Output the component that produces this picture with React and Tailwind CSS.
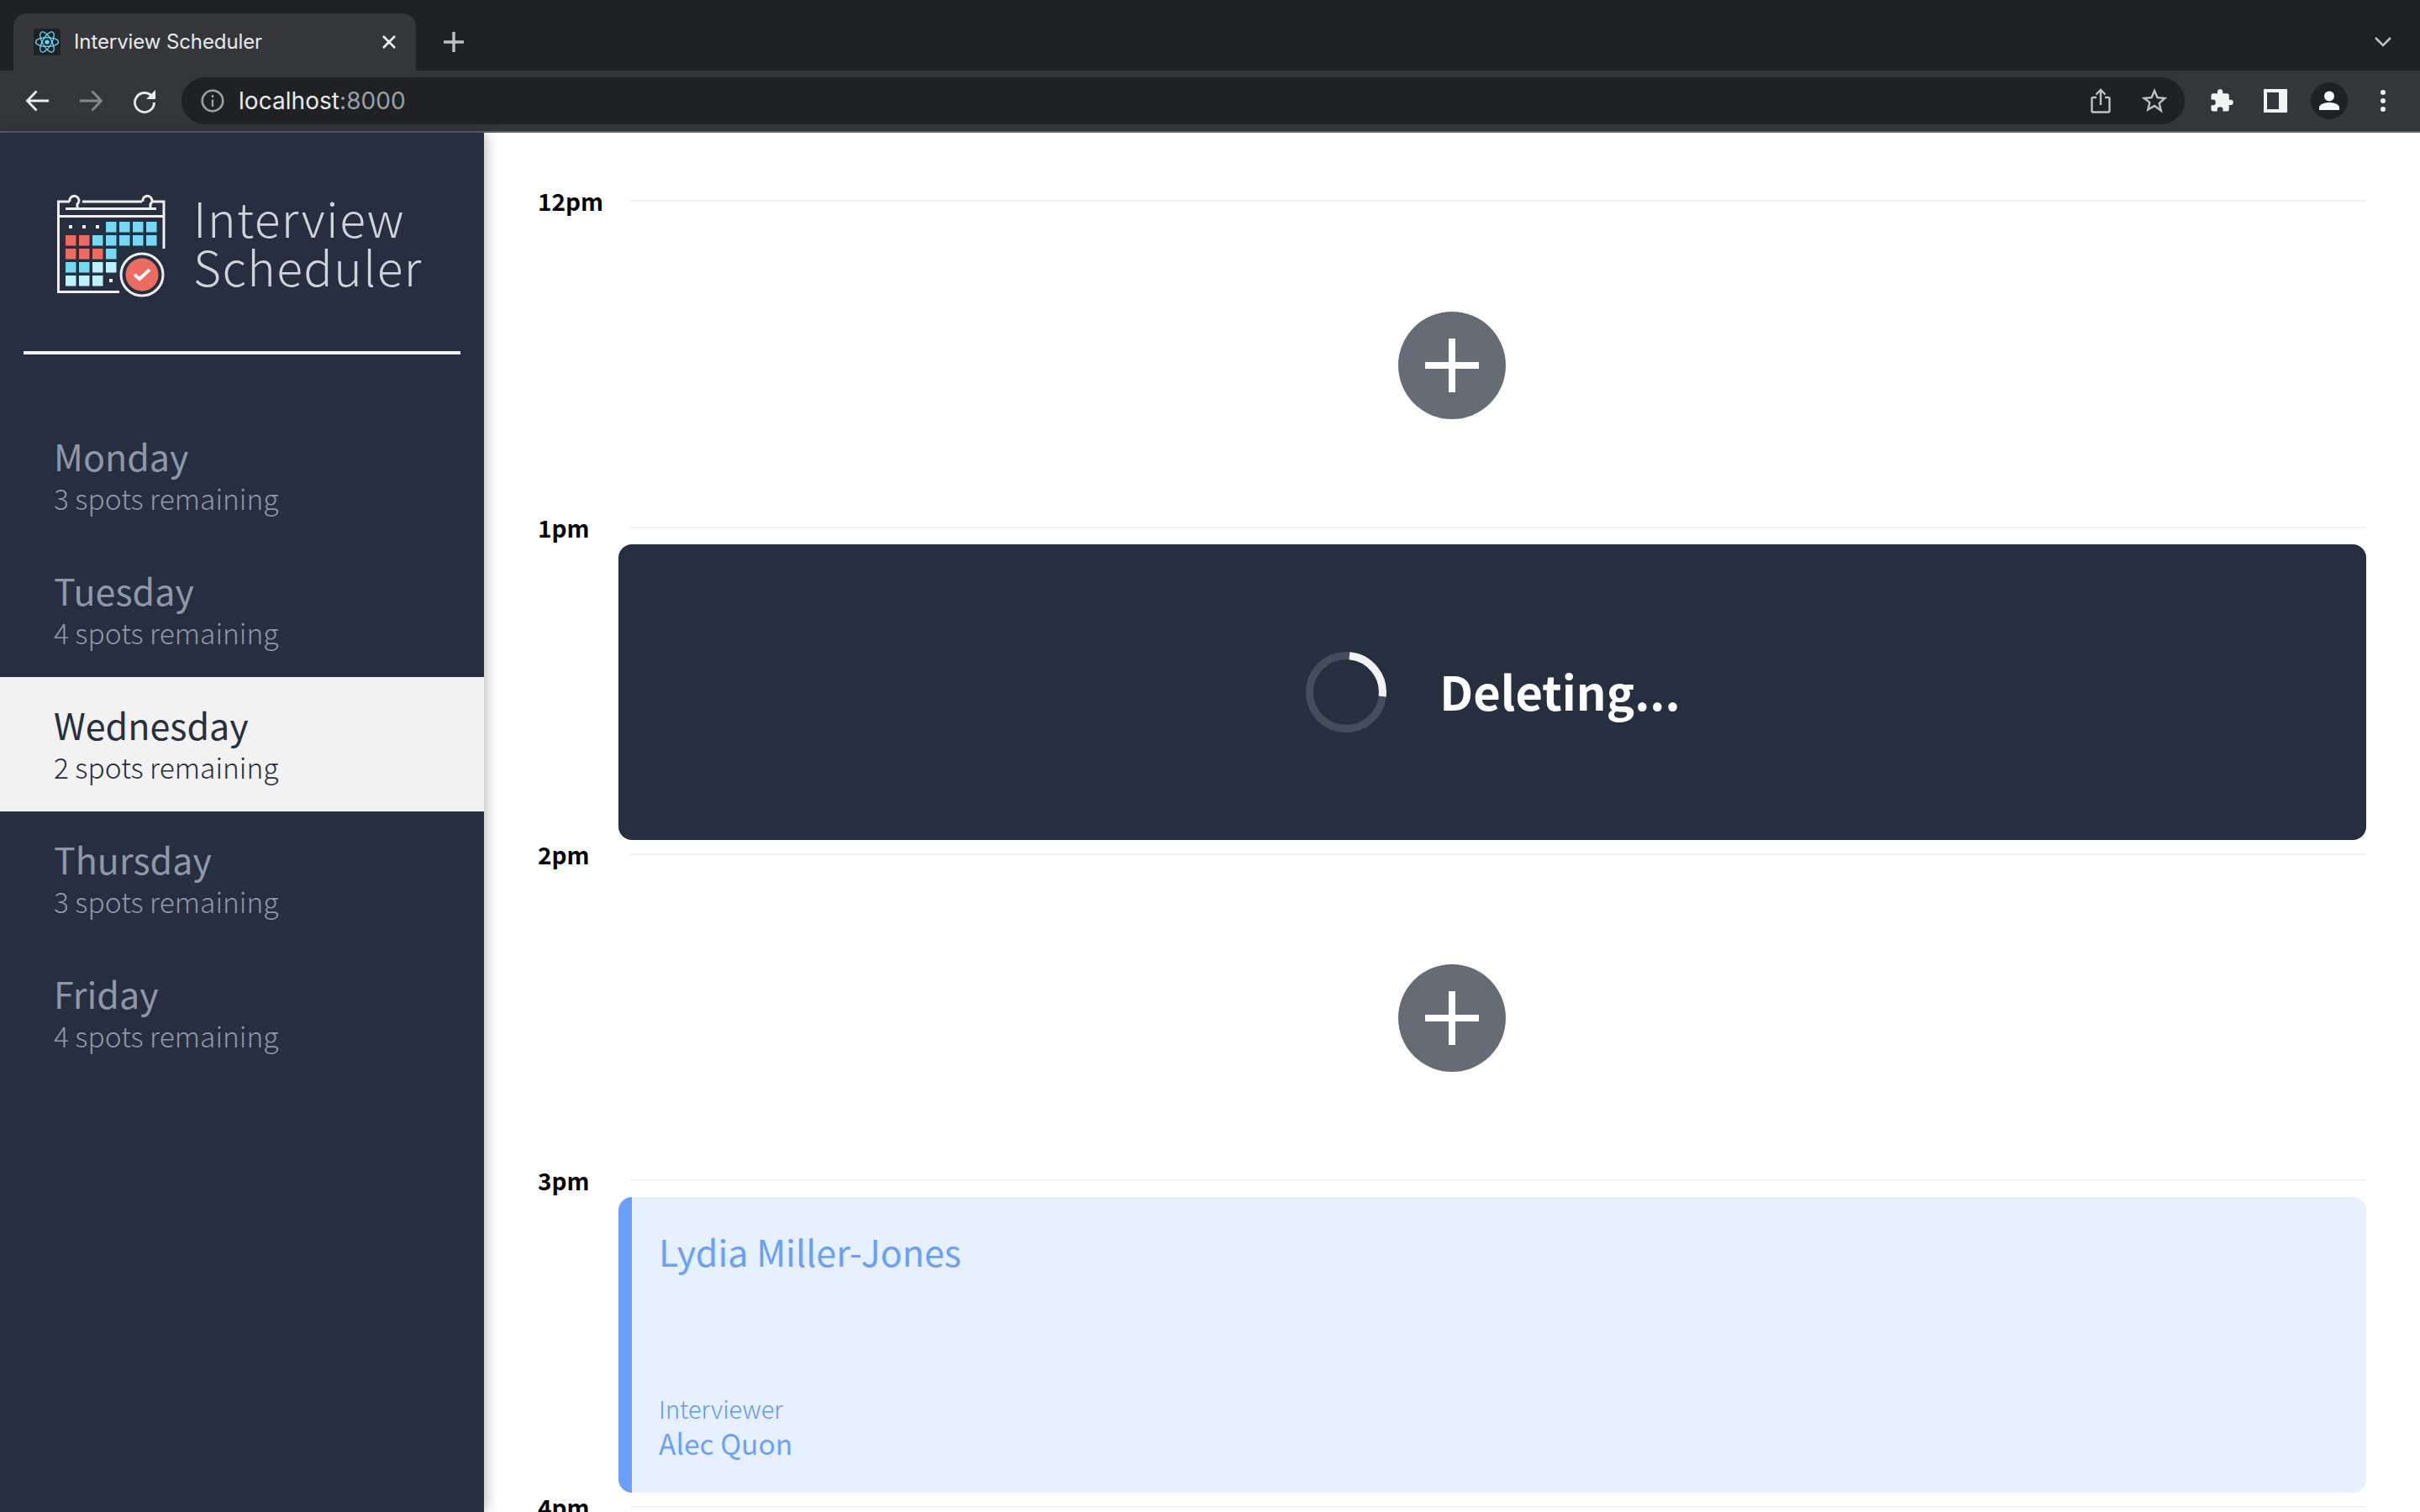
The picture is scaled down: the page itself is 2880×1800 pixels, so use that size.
const FONT = "font-['Noto_Sans_CJK_SC','Noto_Sans',sans-serif]";

const days = [
  { name: "Monday", spots: "3 spots remaining" },
  { name: "Tuesday", spots: "4 spots remaining" },
  { name: "Wednesday", spots: "2 spots remaining", selected: true },
  { name: "Thursday", spots: "3 spots remaining" },
  { name: "Friday", spots: "4 spots remaining" },
];

const BLUE = "#76d7f2";
const RED = "#ee6b62";
const PALE = "#bdf1fb";

const cells = [
  [76, 44, BLUE], [92, 44, BLUE], [108, 44, BLUE], [124, 44, BLUE],
  [28, 60, RED], [44, 60, RED], [60, 60, BLUE], [76, 60, BLUE], [92, 60, BLUE], [108, 60, BLUE], [124, 60, BLUE],
  [28, 76, RED], [44, 76, RED], [60, 76, RED], [76, 76, BLUE],
  [28, 92, BLUE], [44, 92, BLUE], [60, 92, PALE], [76, 92, PALE],
  [28, 108, PALE], [44, 108, PALE], [60, 108, PALE],
];

function Logo() {
  return (
    <svg width="160" height="140" viewBox="0 0 160 140" className="shrink-0 -ml-[18px] -mt-[9px]" fill="none">
      <g stroke="#eeeeee" strokeWidth="3">
        <path d="M33 20H19.500V127.500H92" />
        <path d="M48 20H119" />
        <path d="M132 20H145V76" />
        <path d="M20 37.500H145" />
        <path d="M28 28.500H136" />
        <path d="M33 20a5.500 5.500 0 1 1 9 3V28" />
        <path d="M120 20a5.500 5.500 0 1 1 9 3V28" />
        <circle cx="119" cy="107" r="25" />
      </g>
      {cells.map(([x, y, c], i) => (
        <rect key={i} x={x} y={y} width="12.5" height="12.5" fill={c} />
      ))}
      {[[34, 50], [50, 50], [66, 50], [82, 114]].map(([x, y], i) => (
        <rect key={i} x={x - 2} y={y - 2} width="4" height="4" fill="#eeeeee" />
      ))}
      <circle cx="119" cy="107" r="19.5" fill={RED} />
      <path d="M110 107l6 5 12-11" stroke="#fbfbfb" strokeWidth="4" />
    </svg>
  );
}

function ReactIcon() {
  return (
    <div className="w-8 h-8 bg-[#202124] rounded-[3px] flex items-center justify-center shrink-0">
      <svg width="30" height="30" viewBox="0 0 30 30" fill="none" stroke="#61dafb" strokeWidth="1.3">
        <ellipse cx="15" cy="15" rx="13.5" ry="5.4" />
        <ellipse cx="15" cy="15" rx="13.5" ry="5.4" transform="rotate(60 15 15)" />
        <ellipse cx="15" cy="15" rx="13.5" ry="5.4" transform="rotate(120 15 15)" />
        <circle cx="15" cy="15" r="2.6" fill="#61dafb" stroke="none" />
      </svg>
    </div>
  );
}

function BrowserChrome() {
  return (
    <div className="h-[158px] shrink-0 font-['Inter','Liberation_Sans',sans-serif]">
      <div className="h-[84px] bg-[#202124] flex items-end pl-4">
        <div className="relative w-[479px] h-[68px] bg-[#35363a] rounded-t-2xl flex items-center pl-6 pr-[23px] gap-4">
          <ReactIcon />
          <span className="text-[24px] text-[#e8eaed] tracking-[-0.1px] flex-1">Interview Scheduler</span>
          <svg width="18" height="18" viewBox="0 0 18 18" stroke="#f1f3f4" strokeWidth="2.6"><path d="M2 2l14 14M16 2L2 16" /></svg>
        </div>
        <div className="h-[68px] flex items-center ml-[33px]">
          <svg width="24" height="24" viewBox="0 0 24 24" stroke="#bdc1c6" strokeWidth="3.4"><path d="M12 0v24M0 12h24" /></svg>
        </div>
        <div className="ml-auto h-[68px] flex items-center mr-[34px]">
          <svg width="20" height="12" viewBox="0 0 20 12" fill="none" stroke="#bdc1c6" strokeWidth="2.6"><path d="M1 1l9 9 9-9" /></svg>
        </div>
      </div>
      <div className="h-[72px] bg-[#35363a] flex items-center pl-[30px]">
        <svg width="28" height="26" viewBox="0 0 28 26" fill="none" stroke="#e8eaed" strokeWidth="2.8"><path d="M28 13H3M13.5 1.500L2.500 13l11 11.500" /></svg>
        <svg className="ml-[37px]" width="28" height="26" viewBox="0 0 28 26" fill="none" stroke="#85878a" strokeWidth="2.8"><path d="M0 13h25M14.500 1.500L25.500 13l-11 11.500" /></svg>
        <svg className="ml-[34px]" width="30" height="30" viewBox="0 0 30 30" fill="none">
          <path d="M24.500 10.500A11.500 11.500 0 1 0 26.500 17" stroke="#e8eaed" strokeWidth="2.8" />
          <path d="M28 2v11H17z" fill="#e8eaed" />
        </svg>
        <div className="ml-[29px] w-[2384px] h-14 bg-[#202124] rounded-full flex items-center pl-[23px] pr-[21px]">
          <svg width="28" height="28" viewBox="0 0 28 28" fill="none">
            <circle cx="14" cy="14" r="12.3" stroke="#9aa0a6" strokeWidth="2.6" />
            <path d="M14 12.500V21M14 7v3" stroke="#9aa0a6" strokeWidth="2.4" />
          </svg>
          <span className="ml-[17px] text-[28px] tracking-[0.05px] text-[#e8eaed]">localhost<span className="text-[#9aa0a6]">:8000</span></span>
          <svg className="ml-auto" width="24" height="30" viewBox="0 0 24 30" fill="none" stroke="#bdc1c6" strokeWidth="2.4">
            <path d="M7 11H3a1.500 1.500 0 0 0-1.500 1.500V27A1.500 1.500 0 0 0 3 28.500h18a1.500 1.500 0 0 0 1.500-1.500V12.500A1.500 1.500 0 0 0 21 11h-4" />
            <path d="M12 20V2M6.500 7.500L12 2l5.500 5.500" />
          </svg>
          <svg className="ml-[37px]" width="30" height="30" viewBox="0 0 30 30" fill="none" stroke="#bdc1c6" strokeWidth="2.4">
            <path d="M15 3l3.500 8.200 8.900.8-6.700 5.900 2 8.700L15 21l-7.700 4.600 2-8.700L2.600 12l8.900-.8z" />
          </svg>
        </div>
        <svg className="ml-[29px]" width="30" height="30" viewBox="0 0 24 24" fill="#f1f3f4">
          <path d="M20.500 11H19V7a2 2 0 0 0-2-2h-4V3.500a2.500 2.500 0 0 0-5 0V5H4a2 2 0 0 0-2 2v3.800h1.500a2.700 2.700 0 0 1 0 5.400H2V20a2 2 0 0 0 2 2h3.800v-1.500a2.700 2.700 0 0 1 5.400 0V22H17a2 2 0 0 0 2-2v-4h1.500a2.500 2.500 0 0 0 0-5z" />
        </svg>
        <div className="ml-[35px] w-7 h-7 bg-[#f1f3f4] flex items-start py-1 pl-1">
          <div className="w-[14px] h-5 bg-[#35363a]" />
        </div>
        <div className="ml-7 w-11 h-11 rounded-full bg-[#202124] flex items-center justify-center">
          <svg width="26" height="26" viewBox="0 0 26 26" fill="#f8f9fa">
            <circle cx="13" cy="7.500" r="6" />
            <path d="M1 24v-3c0-4 7-6 12-6s12 2 12 6v3z" />
          </svg>
        </div>
        <div className="ml-[39px] flex flex-col gap-1">
          <div className="w-1.5 h-1.5 rounded-full bg-[#e8eaed]" />
          <div className="w-1.5 h-1.5 rounded-full bg-[#e8eaed]" />
          <div className="w-1.5 h-1.5 rounded-full bg-[#e8eaed]" />
        </div>
      </div>
      <div className="h-0.5 bg-[#5f6368]" />
    </div>
  );
}

function DayItem({ name, spots, selected }) {
  return (
    <li className={`h-40 pl-16 pb-[3px] flex flex-col justify-center ${selected ? "bg-[#f2f2f2] text-[#262f3f]" : "text-[#8e98a6]"}`}>
      <h2 className="text-[43px] leading-[56px] -mt-px">{name}</h2>
      <h3 className="text-[33.5px] leading-[45px] font-light">{spots}</h3>
    </li>
  );
}

function Sidebar() {
  return (
    <nav className="relative z-10 w-[576px] shrink-0 bg-[#262f3f] shadow-[0_0_16px_rgba(0,0,0,0.35)]">
      <div className="h-[260px] pl-[68px] pt-[71px] flex items-start">
        <Logo />
        <div className="ml-5 text-[57px] leading-[58px] font-light text-[#d0d4d9] tracking-[1.4px]">
          <div>Interview</div>
          <div>Scheduler</div>
        </div>
      </div>
      <div className="h-1 mx-7 bg-[#f2f2f2]" />
      <ul className="mt-16">
        {days.map((d) => (
          <DayItem key={d.name} {...d} />
        ))}
      </ul>
    </nav>
  );
}

function AddButton() {
  return (
    <div className="flex-1 flex items-center justify-center pt-[3px]">
      <div className="w-32 h-32 rounded-full bg-[#666c75] flex items-center justify-center">
        <svg width="64" height="64" viewBox="0 0 64 64" stroke="#ffffff" strokeWidth="8"><path d="M32 0v64M0 32h64" /></svg>
      </div>
    </div>
  );
}

function Slot({ time, children }) {
  return (
    <article className="h-[388.8px] flex flex-col shrink-0">
      <header className="h-8 flex items-center shrink-0">
        <h4 className="w-[110px] text-[28px] leading-8 font-bold text-black">{time}</h4>
        <div className="flex-1 h-0.5 bg-[#f2f2f2]" />
      </header>
      {children}
    </article>
  );
}

function Deleting() {
  return (
    <div className="mt-1 ml-24 h-[352px] rounded-2xl bg-[#262f3f] flex items-center justify-center gap-[63px] pl-0.5">
      <svg width="96" height="96" viewBox="0 0 96 96" fill="none" strokeWidth="9">
        <circle cx="48" cy="48" r="43.5" stroke="#444d5a" />
        <path d="M52 4.700A43.500 43.500 0 0 1 91.100 53" stroke="#f2f2f2" />
      </svg>
      <span className="text-[56px] leading-none font-semibold text-white pb-1">Deleting...</span>
    </div>
  );
}

function Show() {
  return (
    <div className="mt-1 ml-24 h-[352px] rounded-2xl bg-[#e7f0fe] border-l-16 border-[#6aa0f9] text-[#6aa0f9] pl-8 flex flex-col">
      <h2 className="mt-[34px] text-[43px] leading-[60px]">Lydia Miller-Jones</h2>
      <div className="mt-auto pb-[38px]">
        <div className="text-[29px] leading-[42px] font-light text-[#5f98f8]">Interviewer</div>
        <div className="text-[33.6px] leading-[42px]">Alec Quon</div>
      </div>
    </div>
  );
}

export default function App() {
  return (
    <div className={`w-[2880px] h-[1800px] overflow-hidden flex flex-col bg-white ${FONT}`}>
      <BrowserChrome />
      <div className="flex-1 flex min-h-0">
        <Sidebar />
        <main className="flex-1 px-16 pt-[65px] overflow-hidden">
          <Slot time="12pm"><AddButton /></Slot>
          <Slot time="1pm"><Deleting /></Slot>
          <Slot time="2pm"><AddButton /></Slot>
          <Slot time="3pm"><Show /></Slot>
          <Slot time="4pm" />
        </main>
      </div>
    </div>
  );
}
